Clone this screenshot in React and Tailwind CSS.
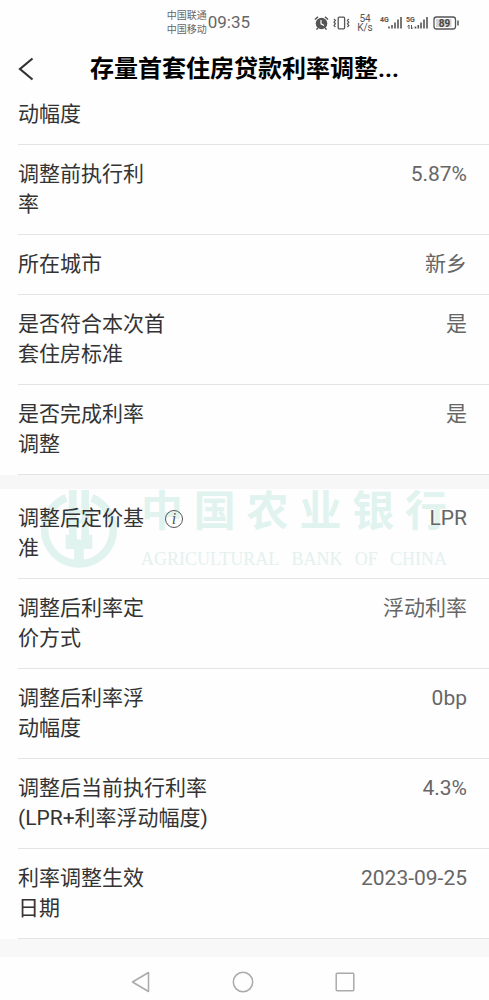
const beforeRows = [
  { label: "动幅度", value: "", first: true },
  { label: "调整前执行利\n率", value: "5.87%" },
  { label: "所在城市", value: "新乡" },
  { label: "是否符合本次首\n套住房标准", value: "是" },
  { label: "是否完成利率\n调整", value: "是" },
];

const afterRows = [
  { label: "调整后定价基\n准", value: "LPR", info: true },
  { label: "调整后利率定\n价方式", value: "浮动利率" },
  { label: "调整后利率浮\n动幅度", value: "0bp" },
  { label: "调整后当前执行利率\n(LPR+利率浮动幅度)", value: "4.3%" },
  { label: "利率调整生效\n日期", value: "2023-09-25" },
];

function StatusIcons() {
  return (
    <svg
      width="146"
      height="24"
      viewBox="314 10 146 24"
      fill="none"
      stroke="#555"
      className="shrink-0"
      aria-hidden="true"
    >
      {/* alarm */}
      <circle cx="321.5" cy="22.5" r="5.8" fill="#555" stroke="none" />
      <path d="M315 18.5l3-2.8M328 18.5l-3-2.8M317.8 27l-1.3 1.6M325.2 27l1.3 1.6" strokeWidth="1.5" />
      <path d="M321 19v3.8l3 1.8" stroke="#fff" strokeWidth="1.2" />
      {/* vibrate */}
      <rect x="338.2" y="16.2" width="6.4" height="11.6" rx="1" strokeWidth="1.3" />
      <path d="M334 18l1.4 1.6-1.4 1.6 1.4 1.6-1.4 1.6 1.4 1.6M348.8 18l-1.4 1.6 1.4 1.6-1.4 1.6 1.4 1.6-1.4 1.6" strokeWidth="1.2" />
      {/* network speed */}
      <g fill="#555" stroke="none" fontFamily="Roboto, sans-serif" textAnchor="middle">
        <text x="365" y="21" fontSize="10">54</text>
        <text x="365" y="30" fontSize="10">K/s</text>
        <text x="384.5" y="21" fontSize="7" fontWeight="700">4G</text>
        <text x="410.5" y="21" fontSize="7" fontWeight="700">5G</text>
      </g>
      {/* signal bars */}
      <path d="M389 27.5v-2M392 27.5v-3.5M395 27.5v-6M398 27.5v-9M401 27.5v-11.5" strokeWidth="1.6" />
      <path d="M415.5 27.5v-2M418.3 27.5v-3.5M421 27.5v-6M424 27.5v-9M427 27.5v-11.5" strokeWidth="1.6" />
      <path d="M409 28v-4l-1.5 1.5M411.5 24v4l1.5-1.5" strokeWidth="1" />
      {/* battery */}
      <rect x="434" y="16" width="21.5" height="12" rx="2.5" fill="#fff" strokeWidth="1.3" />
      <rect x="436" y="18" width="15.5" height="8" fill="#d4d4d4" stroke="none" />
      <path d="M458 19.5v5" strokeWidth="1.5" />
      <text x="444.5" y="25.8" fontSize="10" fontWeight="700" fill="#444" stroke="none" textAnchor="middle" fontFamily="Roboto, sans-serif">
        89
      </text>
    </svg>
  );
}

function StatusBar() {
  return (
    <div className="flex h-[45px] items-center justify-end gap-[64px] pr-[29px] text-[#666]">
      <div className="flex items-center gap-px">
        <div className="text-[10px] leading-[14px]">
          <div>中国联通</div>
          <div>中国移动</div>
        </div>
        <div className="text-[17px]">09:35</div>
      </div>
      <StatusIcons />
    </div>
  );
}

function Watermark() {
  return (
    <div
      className="pointer-events-none absolute inset-x-0 top-0 flex items-center gap-5 pr-[42px] pl-[37px] text-[#e0f3ee]"
      aria-hidden="true"
    >
      <svg width="84" height="80" viewBox="0 0 84 84" className="shrink-0" fill="none" stroke="currentColor">
        <path d="M27 4.5A40 40 0 1 0 57 4.5L54 12A32 32 0 1 1 30 12z" fill="currentColor" stroke="none" />
        <path d="M35.5 0v50M48.500 0v50" strokeWidth="8" />
        <path d="M27.500 23h29M27.500 33h29" strokeWidth="4" />
        <path d="M28 47h11.500v5h5V47H56v15h-9v15H37V62h-9z" fill="currentColor" stroke="none" />
      </svg>
      <div className="flex-1">
        <div className="flex justify-between text-[42px] leading-[46px] font-bold">
          {["中", "国", "农", "业", "银", "行"].map((char) => (
            <span key={char}>{char}</span>
          ))}
        </div>
        <div className="flex justify-between pt-3 font-['Liberation_Serif',serif] text-[18px] leading-6 text-[#e4f1ee]">
          {["AGRICULTURAL", "BANK", "OF", "CHINA"].map((word) => (
            <span key={word}>{word}</span>
          ))}
        </div>
      </div>
    </div>
  );
}

function Row({ label, value, info, first }) {
  return (
    <div
      className={`ml-[18px] flex items-start justify-between border-b border-[#e4e4e4] pr-[22px] pb-[15px] text-[21px] leading-[30px] ${
        first ? "pt-[6px]" : "pt-[14px]"
      }`}
    >
      <dt className="flex items-start gap-[21px] text-[#333]">
        <span className="whitespace-pre-line">{label}</span>
        {info && (
          <button
            type="button"
            aria-label="说明"
            className="mt-[7px] flex size-[18px] items-center justify-center rounded-full border border-[#555] font-['Liberation_Serif',serif] text-[16px] leading-none font-normal text-[#555] italic"
          >
            i
          </button>
        )}
      </dt>
      <dd className="text-[#666]">{value}</dd>
    </div>
  );
}

export default function App() {
  return (
    <div className="flex min-h-screen flex-col bg-[#fefefe] font-[Roboto,'Noto_Sans_CJK_SC',sans-serif]" lang="zh-CN">
      <StatusBar />

      {/* Header */}
      <header className="flex h-12 items-center px-4">
        <button type="button" aria-label="返回" className="flex w-6 items-center">
          <svg width="20" height="24" viewBox="0 0 20 24" fill="none" stroke="#333" strokeWidth="2.2">
            <path d="M16.5 1.5L4 12l12.500 10.500" />
          </svg>
        </button>
        <h1 className="flex-1 pr-6 text-center text-[24px] font-bold whitespace-nowrap text-black">
          存量首套住房贷款利率调整...
        </h1>
      </header>

      <main>
        <dl>
          {beforeRows.map((row) => (
            <Row key={row.label} {...row} />
          ))}
        </dl>

        <div className="h-[14px] bg-[#f7f7f7]" />

        <div className="relative">
          <Watermark />
          <dl className="relative">
            {afterRows.map((row) => (
              <Row key={row.label} {...row} />
            ))}
          </dl>
        </div>

        <div className="h-[18px] bg-[#f8f8f8]" />
      </main>

      {/* System navigation */}
      <nav className="flex flex-1 items-center justify-center gap-20 pt-1.5 pr-1">
        <button type="button" aria-label="后退">
          <svg width="22" height="22" viewBox="0 0 22 22" fill="none" stroke="#aaa" strokeWidth="1.5" strokeLinejoin="round">
            <path d="M18.5 1.500v19L2.500 11z" />
          </svg>
        </button>
        <button type="button" aria-label="主页">
          <svg width="22" height="22" viewBox="0 0 22 22" fill="none" stroke="#aaa" strokeWidth="1.5">
            <circle cx="11" cy="11" r="9.7" />
          </svg>
        </button>
        <button type="button" aria-label="最近任务">
          <svg width="22" height="22" viewBox="0 0 22 22" fill="none" stroke="#aaa" strokeWidth="1.5">
            <rect x="2.2" y="2.2" width="17.6" height="17.6" rx="1" />
          </svg>
        </button>
      </nav>
    </div>
  );
}
